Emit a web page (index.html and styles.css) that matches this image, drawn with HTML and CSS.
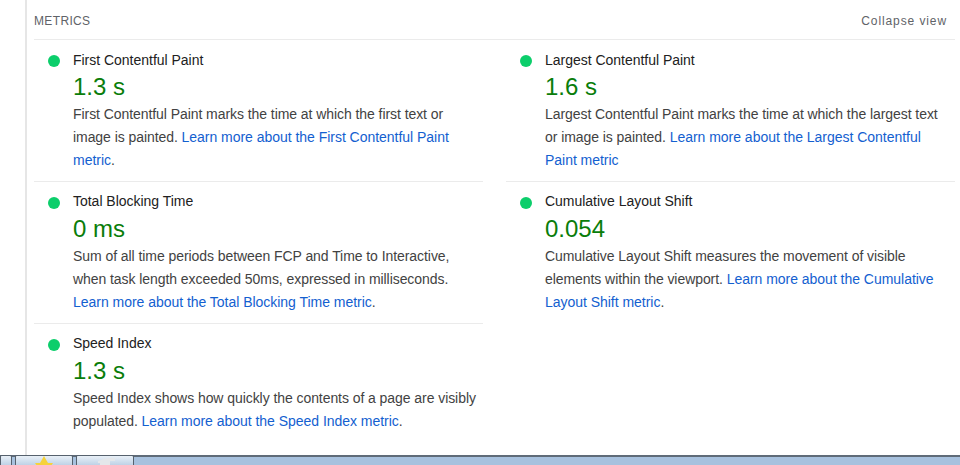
FILE: index.html
```html
<!DOCTYPE html>
<html lang="en">
<head>
<meta charset="utf-8">
<title>Metrics</title>
<link rel="stylesheet" href="styles.css">
</head>
<body>
<div class="page">
  <main class="report">
    <header class="head">
      <span class="title">METRICS</span>
      <span class="toggle">Collapse view</span>
    </header>
    <div class="grid">
      <div class="col">
        <section class="metric">
          <div class="name"><i class="dot"></i>First Contentful Paint</div>
          <div class="value">1.3 s</div>
          <p class="desc">First Contentful Paint marks the time at which the first text or image is painted. <a>Learn more about the First Contentful Paint metric</a>.</p>
        </section>
        <section class="metric">
          <div class="name"><i class="dot"></i>Total Blocking Time</div>
          <div class="value">0 ms</div>
          <p class="desc">Sum of all time periods between FCP and Time to Interactive, when task length exceeded 50ms, expressed in milliseconds. <a>Learn more about the Total Blocking Time metric</a>.</p>
        </section>
        <section class="metric">
          <div class="name"><i class="dot"></i>Speed Index</div>
          <div class="value">1.3 s</div>
          <p class="desc">Speed Index shows how quickly the contents of a page are visibly populated. <a>Learn more about the Speed Index metric</a>.</p>
        </section>
      </div>
      <div class="col">
        <section class="metric">
          <div class="name"><i class="dot"></i>Largest Contentful Paint</div>
          <div class="value">1.6 s</div>
          <p class="desc">Largest Contentful Paint marks the time at which the largest text or image is painted. <a>Learn more about the Largest Contentful Paint metric</a></p>
        </section>
        <section class="metric">
          <div class="name"><i class="dot"></i>Cumulative Layout Shift</div>
          <div class="value">0.054</div>
          <p class="desc">Cumulative Layout Shift measures the movement of visible elements within the viewport. <a>Learn more about the Cumulative Layout Shift metric</a>.</p>
        </section>
      </div>
    </div>
  </main>
  <footer class="taskbar">
    <span class="tab tab-first"></span>
    <span class="tab">
      <svg class="ico" width="30" height="10" viewBox="0 0 30 10"><path d="M15 0l4 7h5l-2 3H8l-2-3h5z" fill="#f6d23a"/></svg>
    </span>
    <span class="tab">
      <svg class="ico" width="30" height="10" viewBox="0 0 30 10"><path d="M8 5q9-4 17-3v3h-5v5H10V7H8z" fill="#e4e7ea"/></svg>
    </span>
  </footer>
</div>
</body>
</html>
```
FILE: styles.css
```css
* { box-sizing: border-box; }
html, body { margin: 0; height: 100%; background: #fff; overflow: hidden; }
body { font-family: "Liberation Sans", Arial, sans-serif; }
.page { height: 465px; display: flex; flex-direction: column; }
.report { flex: 1; margin-left: 25px; padding: 0 5px 0 7px; border-left: 2px solid #e6e6e6; min-height: 0; }
.head { height: 40px; display: flex; justify-content: space-between; align-items: center; padding-top: 2px; border-bottom: 1px solid #ebebeb; color: #5f6368; font-size: 12px; }
.title { letter-spacing: 0.35px; }
.toggle { margin-right: 8px; letter-spacing: 0.9px; }
.grid { display: grid; grid-template-columns: 449px 449px; column-gap: 23px; margin-top: -1px; }
.metric { height: 142px; padding: 10px 5px 0 39px; border-top: 1px solid #ebebeb; position: relative; }
.col .metric:first-child { border-top-color: transparent; padding-top: 11px; }
.dot { position: absolute; left: 14px; top: 15px; width: 12px; height: 12px; border-radius: 50%; background: #0cce6b; }
.name { font-size: 14px; line-height: 18px; color: #212121; letter-spacing: -0.02px; }
.value { font-size: 24px; line-height: 30px; color: #0a7d0a; margin-top: 4px; }
.col .metric:first-child .value { margin-top: 3px; }
.desc { margin: 1px 0 0; font-size: 14px; line-height: 23px; color: #424242; letter-spacing: -0.065px; }
.desc a { color: #1360d0; letter-spacing: -0.03px; }
.taskbar { height: 10px; flex: none; background: #a7c1de; border-top: 2px solid #5f6b78; display: flex; gap: 3px; align-items: flex-start; }
.tab { width: 58px; height: 10px; background: linear-gradient(#e9f0f7, #bfd2e6); border: 1px solid #56616d; border-bottom: 0; border-radius: 2px 2px 0 0; overflow: hidden; display: flex; justify-content: center; margin-top: -2px; }
.tab-first { width: 12px; }
```
